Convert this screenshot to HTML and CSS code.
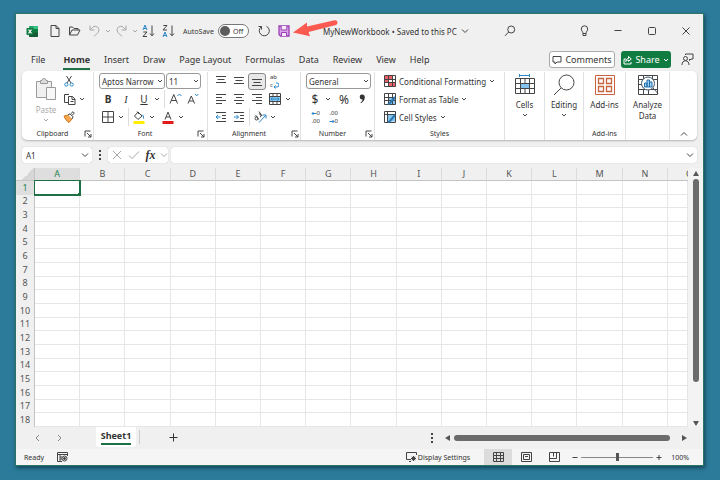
FILE: index.html
```html
<!DOCTYPE html>
<html lang="en">
<head>
  <meta charset="UTF-8" />
  <meta name="viewport" content="width=device-width, initial-scale=1" />
  <title>MyNewWorkbook</title>
  <link rel="stylesheet" href="styles.css">
</head>
<body>

  <svg class="sprite" aria-hidden="true">
    <symbol id="chev" viewBox="0 0 6 6"><path d="M1 2l2 2 2-2" /></symbol>
    <symbol id="chev-big" viewBox="0 0 8 8"><path d="M1 2.500l3 3 3-3" /></symbol>
    <symbol id="launch" viewBox="0 0 8 8"><path d="M1 6.500V1h5.500M3 3l4 4M7 4v3H4" /></symbol>
  </svg>

  <div class="window">

    <header class="titlebar">
      <span class="app-icon">
        <svg width="13" height="13" viewBox="0 0 13 13">
          <rect x="3" y="1" width="9" height="11" rx="1" fill="#21a366" />
          <path d="M3 6h9v5a1 1 0 0 1-1 1H4a1 1 0 0 1-1-1z" fill="#185c37" />
          <path d="M7.500 1H11a1 1 0 0 1 1 1v2H7.500z" fill="#33c481" />
          <rect x="7.500" y="4" width="4.500" height="3.500" fill="#107c41" />
          <rect x="0.500" y="3" width="7" height="7" rx="0.700" fill="#107c41" />
          <path d="M2.500 4.700l3 3.700M5.500 4.700l-3 3.700" stroke="#fff" stroke-width="1.100" fill="none" />
        </svg>
      </span>
      <div class="quick">
        <button aria-label="New"><svg class="ic" width="12" height="14" viewBox="0 0 12 14"><path d="M2 1.500h5l3 3v8H2zM7 1.500v3h3" /></svg></button>
        <button aria-label="Open"><svg class="ic" width="13" height="12" viewBox="0 0 13 12"><path d="M1.500 10V2h3l1.500 1.500h4V5M1.500 10L4 5h8l-2.500 5z" /></svg></button>
        <span class="split off">
          <button aria-label="Undo"><svg class="ic" width="13" height="14" viewBox="0 0 13 14"><path d="M2 1.500v4.500h4.500M2 6l2.500-2.500a3.700 3.700 0 0 1 5.500 5L6 12.500" /></svg></button>
          <button class="arr" aria-label="Undo list"><svg class="ic" width="6" height="6"><use href="#chev" /></svg></button>
        </span>
        <span class="split off">
          <button aria-label="Redo"><svg class="ic" width="13" height="14" viewBox="0 0 13 14"><path d="M11 1.500v4.500H6.500M11 6L8.500 3.500a3.700 3.700 0 0 0-5.500 5l4 4" /></svg></button>
          <button class="arr" aria-label="Redo list"><svg class="ic" width="6" height="6"><use href="#chev" /></svg></button>
        </span>
        <button aria-label="Sort A to Z"><svg class="ic" width="13" height="14" viewBox="0 0 13 14"><path class="blue" d="M1 6l2-5 2 5M1.700 4.500h2.600" /><path d="M1.300 8H5l-4 4.500h4M10 1.500v10M8 9.500l2 2.300 2-2.300" /></svg></button>
        <button aria-label="Sort Z to A"><svg class="ic" width="13" height="14" viewBox="0 0 13 14"><path d="M1.300 1.500H5L1 6h4M10 1.500v10M8 9.500l2 2.300 2-2.300" /><path class="blue" d="M1 13l2-5 2 5M1.700 11.500h2.600" /></svg></button>
      </div>
      <label class="autosave">AutoSave
        <span class="toggle"><input type="checkbox" role="switch"><span>Off</span></span>
      </label>
      <div class="quick">
        <button aria-label="Refresh"><svg class="ic" width="14" height="14" viewBox="0 0 14 14"><path d="M4.500 2.500H1.500M4.500 2.500v3M4.300 2.800A5 5 0 1 0 9.500 2.300" /></svg></button>
        <button aria-label="Save"><svg width="12" height="12" viewBox="0 0 12 12"><path d="M1 1h10v10H2.500L1 9.500z" fill="#d9a5e6" stroke="#9b3fb5" stroke-width="1.300" /><path d="M3.200 1v4h5.600V1M3.500 11V7.500h5V11" fill="#f6eaf9" stroke="#9b3fb5" /></svg></button>
      </div>
      <h1 class="doc">MyNewWorkbook • Saved to this PC <svg class="ic" width="8" height="8"><use href="#chev-big" /></svg></h1>
      <button class="search" aria-label="Search"><svg class="ic" width="12" height="12" viewBox="0 0 12 12"><circle cx="7.200" cy="4.500" r="3.500" /><path d="M4.700 7L1 10.800" /></svg></button>
      <div class="sys">
        <button aria-label="Tips"><svg class="ic" width="9" height="12" viewBox="0 0 9 12"><path d="M3 8.500C3 6.500 1.300 6 1.300 4a3.200 3.200 0 0 1 6.400 0C7.700 6 6 6.500 6 8.500v2H3zM3 8.500h3" /></svg></button>
        <button aria-label="Minimize"><svg class="ic" width="8" height="8" viewBox="0 0 8 8"><path d="M0.500 3.500h7" /></svg></button>
        <button aria-label="Maximize"><svg class="ic" width="8" height="8" viewBox="0 0 8 8"><rect x="0.500" y="0.500" width="7" height="7" rx="1" /></svg></button>
        <button aria-label="Close"><svg class="ic" width="8" height="8" viewBox="0 0 8 8"><path d="M0.500 0.500l7 7M7.500 0.500l-7 7" /></svg></button>
      </div>
      <svg class="pointer" width="46" height="18" viewBox="0 0 46 18">
        <path d="M0 12.500L14 2.500L14 6.500L41.500 0.200Q44.500 0 44.500 2.500Q44.500 4.300 43 5L15.500 12L17 16.200Z" fill="#fb5a50" />
      </svg>
    </header>

    <nav class="tabs">
      <button class="file">File</button>
      <button class="active">Home</button>
      <button>Insert</button>
      <button>Draw</button>
      <button>Page Layout</button>
      <button>Formulas</button>
      <button>Data</button>
      <button>Review</button>
      <button>View</button>
      <button>Help</button>
      <div class="actions">
        <button class="comments"><svg class="ic" width="10" height="10" viewBox="0 0 10 10"><path d="M1 1.500h8v5.500H5L3 9V7H1z" /></svg>Comments</button>
        <button class="share"><svg class="ic" width="9" height="10" viewBox="0 0 9 10"><path d="M3 4H1v5h7V7M2.800 6.500C3 4.500 4 3.500 5.500 3.500V1.500L8.300 4 5.500 6.300V5C4.300 5 3.500 5.500 2.800 6.500z" /></svg>Share<svg class="ic" width="6" height="6"><use href="#chev" /></svg></button>
        <button class="person" aria-label="Account"><svg class="ic" width="13" height="13" viewBox="0 0 13 13"><circle cx="4.500" cy="5.500" r="2" /><path d="M1 12c0-3 1.500-4.200 3.500-4.200S8 9 8 12M4.500 2V1h7.500v5h-2L8.500 7.500V6" /></svg></button>
      </div>
    </nav>

    <section class="ribbon">
      <div class="group clipboard">
        <div class="body">
          <button class="big off paste">
            <svg width="24" height="24" viewBox="0 0 24 24" fill="#f0f0f0" stroke="#9a9a9a"><path d="M2.500 4.500h15v16h-15z" /><path d="M6.500 6.500v-3H8a2 2 0 0 1 4 0h1.500v3z" fill="#ddd" /><path d="M12.500 10.500h9v12h-9z" fill="#f7f7f7" /></svg>
            <span>Paste</span>
            <svg class="ic" width="6" height="6"><use href="#chev" /></svg>
          </button>
          <div class="rows">
            <div class="row"><button aria-label="Cut"><svg class="ic" width="10" height="12" viewBox="0 0 10 12"><path d="M2.500 1l4.500 7M7.500 1L3 8" /><circle class="blue" cx="2.300" cy="9.500" r="1.600" /><circle class="blue" cx="7.700" cy="9.500" r="1.600" /></svg></button></div>
            <div class="row"><button aria-label="Copy"><svg class="ic" width="13" height="12" viewBox="0 0 13 12"><path d="M5 9.500H1.500v-8H6M5.500 3.500h4l2.500 2.500v5.500H5.500zM9 3.500V6.500h3M7.500 8.500h3" /></svg></button><button class="arr" aria-label="Copy list"><svg class="ic" width="6" height="6"><use href="#chev" /></svg></button></div>
            <div class="row"><button aria-label="Format Painter"><svg width="12" height="12" viewBox="0 0 12 12"><path d="M1 5l4-1 4 4-3 3.500C4 10.500 2 8 1 5z" fill="#f4a650" stroke="#d8771a" /><path d="M5 4l2-1.200 3 3L9 8M7.500 3L10 0.700l1.300 1.300L9 4.500" fill="#fff" stroke="#444" /></svg></button></div>
          </div>
        </div>
        <footer><span>Clipboard</span><button aria-label="Clipboard settings"><svg class="ic" width="8" height="8"><use href="#launch" /></svg></button></footer>
      </div>

      <div class="group font">
        <div class="rows">
          <div class="row combos">
            <select class="face" aria-label="Font"><option>Aptos Narrow</option></select>
            <select class="size" aria-label="Font size"><option>11</option></select>
          </div>
          <div class="row">
            <button class="glyph"><b>B</b></button><button class="glyph serif"><i>I</i></button><button class="glyph"><u>U</u></button><button class="arr" aria-label="Underline list"><svg class="ic" width="6" height="6"><use href="#chev" /></svg></button>
            <i class="sep wide"></i>
            <button aria-label="Increase font size"><svg class="ic" width="13" height="12" viewBox="0 0 13 12"><path d="M1 10.500L4.800 1.500l3.700 9M2.500 7.500h4.700" /><path class="blue" d="M8.500 3L10.500 1l2 2" /></svg></button>
            <button aria-label="Decrease font size"><svg class="ic" width="12" height="12" viewBox="0 0 12 12"><path d="M1 10.500L4.300 3l3.300 7.500M2.300 8h4" /><path class="blue" d="M8 1l1.800 1.800L11.500 1" /></svg></button>
          </div>
          <div class="row">
            <button aria-label="Borders"><svg class="ic" width="12" height="12" viewBox="0 0 12 12"><path d="M0.500 0.500h11v11h-11zM6 0.500v11M0.500 6h11" /></svg></button><button class="arr" aria-label="Borders list"><svg class="ic" width="6" height="6"><use href="#chev" /></svg></button>
            <i class="sep wide"></i>
            <button aria-label="Fill color"><svg class="ic" width="12" height="13" viewBox="0 0 12 13"><path d="M5 1L9 5 5 8.500 1.500 5zM4 0.500L6 3" /><path class="blue" d="M9 3.500q2 1 1.500 4" /><path class="yellow" d="M0.500 11.500h11" /></svg></button><button class="arr" aria-label="Fill list"><svg class="ic" width="6" height="6"><use href="#chev" /></svg></button>
            <button class="gap" aria-label="Font color"><svg class="ic" width="12" height="13" viewBox="0 0 12 13"><path d="M3 8.500L6 1l3 7.500M4 6h4" /><path class="red" d="M0.500 11.500h11" /></svg></button><button class="arr" aria-label="Font color list"><svg class="ic" width="6" height="6"><use href="#chev" /></svg></button>
          </div>
        </div>
        <footer><span>Font</span><button aria-label="Font settings"><svg class="ic" width="8" height="8"><use href="#launch" /></svg></button></footer>
      </div>

      <div class="group align">
        <div class="rows">
          <div class="row">
            <button aria-label="Top align"><svg class="ic" width="12" height="12" viewBox="0 0 12 12"><path d="M1 1.500h10M2.500 4.500h7M1 7.500h10" /></svg></button>
            <button aria-label="Middle align"><svg class="ic" width="12" height="12" viewBox="0 0 12 12"><path d="M1 2.500h10M2.500 5.500h7M1 8.500h10" /></svg></button>
            <button class="on" aria-label="Bottom align"><svg class="ic" width="12" height="12" viewBox="0 0 12 12"><path d="M1 4.500h10M2.500 7.500h7M1 10.500h10" /></svg></button>
            <button class="wrap" aria-label="Wrap text"><span>ab</span><span>c<svg class="ic" width="6" height="7" viewBox="0 0 6 7"><path class="blue" d="M3 1h1a1.500 1.500 0 0 1 0 4H1M2.500 3.500L1 5l1.500 1.500" /></svg></span></button>
          </div>
          <div class="row">
            <button aria-label="Align left"><svg class="ic" width="12" height="12" viewBox="0 0 12 12"><path d="M1 1.500h10M1 4.500h6M1 7.500h10M1 10.500h6" /></svg></button>
            <button aria-label="Center"><svg class="ic" width="12" height="12" viewBox="0 0 12 12"><path d="M1 1.500h10M3 4.500h6M1 7.500h10M3 10.500h6" /></svg></button>
            <button aria-label="Align right"><svg class="ic" width="12" height="12" viewBox="0 0 12 12"><path d="M1 1.500h10M5 4.500h6M1 7.500h10M5 10.500h6" /></svg></button>
            <button aria-label="Merge and center"><svg class="ic" width="12" height="12" viewBox="0 0 12 12"><path class="tint" d="M1 3.500h10v5H1z" /><path d="M0.500 0.500h11v11h-11zM0.500 3.500h11M0.500 8.500h11M4 1v2.500M8 1v2.500M4 8.500V11M8 8.500V11" /><path class="blue" d="M2 6h8M3.500 4.700L2 6l1.500 1.300M8.500 4.700L10 6 8.500 7.300" /></svg></button><button class="arr" aria-label="Merge list"><svg class="ic" width="6" height="6"><use href="#chev" /></svg></button>
          </div>
          <div class="row">
            <button aria-label="Decrease indent"><svg class="ic" width="12" height="12" viewBox="0 0 12 12"><path d="M1 1.500h10M7 4.500h4M7 7.500h4M1 10.500h10" /><path class="blue" d="M1 6h4.500M3 4L1 6l2 2" /></svg></button>
            <button aria-label="Increase indent"><svg class="ic" width="12" height="12" viewBox="0 0 12 12"><path d="M1 1.500h10M7 4.500h4M7 7.500h4M1 10.500h10" /><path class="blue" d="M1 6h4.500M3.500 4l2 2-2 2" /></svg></button>
            <i class="sep"></i>
            <button aria-label="Orientation"><svg class="ic" width="13" height="12" viewBox="0 0 13 12"><path d="M5 0.500l3 4.500M5 3a1.500 1.500 0 1 1 1 3M4.500 8.500L2.500 5Q1.500 4 1 5.500" /><circle cx="2.500" cy="7.500" r="1.500" /><path class="blue" d="M5 11.500L11.500 4.500M8.500 4h3.500v3.500" /></svg></button><button class="arr" aria-label="Orientation list"><svg class="ic" width="6" height="6"><use href="#chev" /></svg></button>
          </div>
        </div>
        <footer><span>Alignment</span><button aria-label="Alignment settings"><svg class="ic" width="8" height="8"><use href="#launch" /></svg></button></footer>
      </div>

      <div class="group number">
        <div class="rows">
          <div class="row"><select class="format" aria-label="Number format"><option>General</option></select></div>
          <div class="row">
            <button class="sign">$</button><button class="arr" aria-label="Currency list"><svg class="ic" width="6" height="6"><use href="#chev" /></svg></button>
            <button class="sign gap">%</button><button aria-label="Comma style"><svg width="7" height="10" viewBox="0 0 7 10"><path d="M3 0.500a2.500 2.500 0 0 1 2.800 2.800C5.800 6 4.300 8 2 9.200L1.500 8.500C3 7.500 3.500 6.500 3.500 5.500A2.500 2.500 0 0 1 3 0.500z" fill="#333" /></svg></button>
          </div>
          <div class="row">
            <button class="dec" aria-label="Increase decimal"><span><svg class="ic" width="6" height="5" viewBox="0 0 6 5"><path class="blue" d="M1 2.500h4.500M2.500 1L1 2.500 2.500 4" /></svg>0</span><span>.00</span></button>
            <button class="dec" aria-label="Decrease decimal"><span>.00</span><span><svg class="ic" width="6" height="5" viewBox="0 0 6 5"><path class="blue" d="M0.500 2.500H5M3.500 1L5 2.500 3.500 4" /></svg>0</span></button>
          </div>
        </div>
        <footer><span>Number</span><button aria-label="Number settings"><svg class="ic" width="8" height="8"><use href="#launch" /></svg></button></footer>
      </div>

      <div class="group styles">
        <div class="rows">
          <button class="item"><svg class="ic" width="12" height="12" viewBox="0 0 12 12"><path class="redfill" d="M1 1h7v3.500H1zM1 4.500h3.500v3H1zM4.500 7.500H11V11H4.500z" /><path d="M0.500 0.500h11v11h-11zM0.500 4.500h11M0.500 7.500h11M4.500 0.500v11M8.500 0.500v11" /></svg>Conditional Formatting<svg class="ic" width="6" height="6"><use href="#chev" /></svg></button>
          <button class="item"><svg class="ic" width="12" height="12" viewBox="0 0 12 12"><path class="tint" d="M4 4h7v7H4z" /><path d="M0.500 0.500h11v11h-11zM0.500 4.500h11M0.500 7.500h11M4.500 0.500v11M8.500 0.500v11" /><path class="brush" d="M11 4L6 10l-2 1.500" /></svg>Format as Table<svg class="ic" width="6" height="6"><use href="#chev" /></svg></button>
          <button class="item"><svg class="ic" width="12" height="12" viewBox="0 0 12 12"><path class="tint" d="M3 3.500h8v7H3z" /><path d="M0.500 0.500h11v11h-11zM0.500 3.500h11M3.500 0.500v11" /><path class="brush" d="M11 4L6 10l-2 1.500" /></svg>Cell Styles<svg class="ic" width="6" height="6"><use href="#chev" /></svg></button>
        </div>
        <footer><span>Styles</span></footer>
      </div>

      <div class="group single cells">
        <button class="big">
          <svg class="ic" width="22" height="22" viewBox="0 0 22 22"><path class="blue" d="M5 1.500h11M5.500 0v3M15.500 0v3" /><path class="tint" d="M6 9.500h10v5H6z" /><path d="M1.500 4.500h19v15h-19zM1.500 9.500h19M1.500 14.500h19M6.500 4.500v15M15.500 4.500v15M11 4.500v5M11 14.500v5" /></svg>
          <span>Cells</span><svg class="ic" width="6" height="6"><use href="#chev" /></svg>
        </button>
      </div>
      <div class="group single editing">
        <button class="big">
          <svg class="ic" width="22" height="22" viewBox="0 0 22 22"><circle cx="13.500" cy="8.500" r="7.500" /><path d="M8 14l-7 7" /></svg>
          <span>Editing</span><svg class="ic" width="6" height="6"><use href="#chev" /></svg>
        </button>
      </div>
      <div class="group single addins">
        <button class="big">
          <svg width="22" height="22" viewBox="0 0 22 22" fill="none" stroke="#c9623f"><path d="M1.500 1.500h19v19h-19z" /><path d="M4.500 4.500h5v5h-5zM12.500 4.500h5v5h-5zM4.500 12.500h5v5h-5zM12.500 12.500h5v5h-5z" stroke-width="1.300" /></svg>
          <span>Add-ins</span>
        </button>
        <footer><span>Add-ins</span></footer>
      </div>
      <div class="group single analyze">
        <button class="big">
          <svg class="ic" width="22" height="22" viewBox="0 0 22 22"><path d="M1.500 1.500h19v19h-19zM1.500 5.500h19M1.500 10.500h4M1.500 15.500h19M6.500 1.500v4M15.500 1.500v4M6.500 15.500v5M11.500 15.500v5" /><circle class="lens" cx="11" cy="9.500" r="6.500" /><path class="lens" d="M16 14l5 5.500" /><path class="bars" d="M7.500 13V9h2.500v4zM10 13V6h2.500v7zM12.500 13V8H15v5z" /></svg>
          <span>Analyze<br>Data</span>
        </button>
      </div>
      <button class="collapse" aria-label="Collapse ribbon"><svg class="ic" width="8" height="8" viewBox="0 0 8 8"><path d="M1 5.500l3-3 3 3" /></svg></button>
    </section>

    <div class="formula">
      <div class="namebox"><input aria-label="Name box" value="A1"><button aria-label="Names"><svg class="ic" width="8" height="8"><use href="#chev-big" /></svg></button></div>
      <span class="dots"><i></i><i></i><i></i></span>
      <div class="fxbox">
        <button class="off" aria-label="Cancel"><svg class="ic" width="10" height="10" viewBox="0 0 10 10"><path d="M1 1l8 8M9 1L1 9" /></svg></button>
        <button class="off" aria-label="Enter"><svg class="ic" width="12" height="10" viewBox="0 0 12 10"><path d="M1 5.500L4 8.500 11 1.500" /></svg></button>
        <button class="fx">fx</button>
        <button class="off arr" aria-label="Functions"><svg class="ic" width="8" height="8"><use href="#chev-big" /></svg></button>
      </div>
      <div class="entry"><input aria-label="Formula bar"><button aria-label="Expand formula bar"><svg class="ic" width="8" height="8"><use href="#chev-big" /></svg></button></div>
    </div>

    <main class="sheet">
      <div class="grid">
        <table>
          <colgroup><col class="rowhead"><col span="14"><col class="last"></colgroup>
          <thead><tr id="head"><td class="corner"></td></tr></thead>
          <tbody id="cells"></tbody>
        </table>
      </div>
      <div class="vscroll"><i class="up"></i><div class="track"><div class="thumb"></div></div><i class="down"></i></div>
    </main>

    <div class="sheetbar">
      <button aria-label="Previous sheet"><svg class="ic" width="6" height="8" viewBox="0 0 6 8"><path d="M5 1L2 4l3 3" /></svg></button>
      <button aria-label="Next sheet"><svg class="ic" width="6" height="8" viewBox="0 0 6 8"><path d="M1 1l3 3-3 3" /></svg></button>
      <button class="tab"><span>Sheet1</span></button>
      <button class="add" aria-label="New sheet"><svg class="ic" width="9" height="9" viewBox="0 0 9 9"><path d="M4.500 0.500v8M0.500 4.500h8" /></svg></button>
      <span class="dots"><i></i><i></i><i></i></span>
      <div class="hscroll"><i class="left"></i><div class="thumb"></div><i class="right"></i></div>
    </div>

    <footer class="status">
      <span>Ready</span>
      <button class="macro" aria-label="Record macro"><svg class="ic" width="11" height="10" viewBox="0 0 11 10"><path d="M5 9.500H0.500v-9h10V4M1 2.500h9M3 3v6M3 5h2M3 7h2" /><circle cx="7.500" cy="6.500" r="2.500" /><circle cx="7.500" cy="6.500" r="1" fill="#333" /></svg></button>
      <button class="display"><svg class="ic" width="11" height="10" viewBox="0 0 11 10"><path d="M5 7.500H0.500v-7h10V3M3 9.500h2" /><circle cx="7.500" cy="6.500" r="1.500" /><path d="M7.500 4v5M5 6.500h5M5.800 4.800l3.400 3.400M9.200 4.800L5.800 8.200" /></svg>Display Settings</button>
      <button class="view on" aria-label="Normal"><svg class="ic" width="11" height="10" viewBox="0 0 11 10"><path d="M0.500 0.500h10v9h-10zM0.500 3.500h10M0.500 6.500h10M3.500 0.500v9M7.500 0.500v9" /></svg></button>
      <button class="view" aria-label="Page Layout"><svg class="ic" width="11" height="10" viewBox="0 0 11 10"><path d="M0.500 0.500h10v9h-10zM2.500 2.500h6v5h-6zM4 4.500h3" /></svg></button>
      <button class="view" aria-label="Page Break"><svg class="ic" width="11" height="10" viewBox="0 0 11 10"><path d="M0.500 0.500h10v9h-10zM0.500 6.500h7v-6M4.500 0.500v4" /></svg></button>
      <div class="zoom">
        <button aria-label="Zoom out"><svg class="ic" width="6" height="6" viewBox="0 0 6 6"><path d="M0.500 3.500h5" /></svg></button>
        <input type="range" aria-label="Zoom" min="0" max="100" value="50">
        <button aria-label="Zoom in"><svg class="ic" width="6" height="6" viewBox="0 0 6 6"><path d="M0.500 3.500h5M3 1v5" /></svg></button>
      </div>
      <span>100%</span>
    </footer>
  </div>

  <script>
    const columns = 'ABCDEFGHIJKLMNO'.split('');
    const head = document.getElementById('head');
    const cells = document.getElementById('cells');

    columns.forEach(function (name) {
      head.insertAdjacentHTML('beforeend', '<th scope="col">' + name + '</th>');
    });

    for (let row = 1; row <= 18; row++) {
      cells.insertAdjacentHTML('beforeend',
        '<tr><th scope="row">' + row + '</th>' + columns.map(() => '<td></td>').join('') + '</tr>');
    }
    head.children[1].className = 'current';
    cells.rows[0].cells[0].className = 'current';
    cells.rows[0].cells[1].className = 'selected';
  </script>
</body>
</html>
```
FILE: styles.css
```css
* {
  box-sizing: border-box;
}

body {
  margin: 0;
  height: 100vh;
  padding: 14px 17px 15px 16px;
  background: #2c7b9a;
  font-family: "Noto Sans", "Open Sans", sans-serif;
  font-size: 8px;
  color: #333;
  display: flex;
}

.sprite {
  display: none;
}

button, input, select {
  font: inherit;
  color: inherit;
  border: none;
  background: none;
  padding: 0;
  margin: 0;
  min-width: 0;
}

button {
  display: flex;
  align-items: center;
  justify-content: center;
}

svg {
  flex: none;
}

.ic {
  fill: none;
  stroke: #444;
  stroke-width: 1;
}

.ic .blue { stroke: #2b88c8; }
.ic .yellow { stroke: #ffee00; stroke-width: 3; }
.ic .red { stroke: #e01b1b; stroke-width: 3; }
.ic .tint { fill: #83c3ee; stroke: none; }
.ic .redfill { fill: #f0606a; stroke: none; }
.ic .brush { stroke: #2b78b0; stroke-width: 2; }
.ic .lens { fill: #fff; stroke: #456; }
.ic .bars { fill: #9fd0f2; stroke: #1f6fae; }

.off {
  color: #aaa;
}

.off .ic {
  stroke: #a8a8a8;
}

.window {
  flex: 1;
  min-width: 0;
  display: flex;
  flex-direction: column;
  background: #f0f0f0;
  box-shadow: 0 0 0 1px #2c7466, 1px 2px 4px 1px rgba(0, 30, 40, 0.6);
}

/* title bar */

.titlebar {
  position: relative;
  height: 34px;
  display: flex;
  align-items: center;
}

.app-icon {
  display: flex;
  justify-content: center;
  width: 19px;
  margin: 0 3px 0 7px;
}

.quick {
  display: flex;
  gap: 1px;
}

.quick button {
  width: 19px;
  height: 20px;
}

.split {
  display: flex;
}

.quick .arr {
  width: 7px;
}

.autosave {
  display: flex;
  align-items: center;
  justify-content: space-between;
  width: 66px;
  margin: 0 5px;
  font-size: 7px;
}

.toggle {
  display: flex;
  align-items: center;
  gap: 3px;
  width: 31px;
  height: 14px;
  border: 1px solid #777;
  border-radius: 7px;
  background: #fff;
}

.toggle input {
  appearance: none;
  width: 10px;
  height: 10px;
  margin-left: 1px;
  border-radius: 50%;
  background: #5c5c5c;
}

.doc {
  display: flex;
  align-items: center;
  gap: 4px;
  margin: 0 auto 0 30px;
  font-size: 8px;
  font-weight: normal;
  white-space: nowrap;
}

.search {
  width: 24px;
  margin-right: 45px;
}

.sys {
  display: flex;
}

.sys button {
  width: 34px;
  height: 34px;
}

.pointer {
  position: absolute;
  left: 277px;
  top: 6px;
}

/* ribbon tabs */

.tabs {
  display: flex;
  height: 23px;
  padding: 0 6px 0 8px;
  font-size: 9px;
}

.tabs > button {
  padding: 0 7px;
  height: 23px;
}

.tabs .file {
  margin-right: 4px;
}

.tabs .active {
  font-weight: bold;
  background: linear-gradient(#1e7145, #1e7145) center 20px / calc(100% - 14px) 2px no-repeat;
}

.actions {
  display: flex;
  align-items: center;
  gap: 6px;
  margin-left: auto;
}

.comments, .share {
  height: 17px;
  border-radius: 3px;
  gap: 3px;
}

.comments {
  width: 66px;
  background: #fff;
  border: 1px solid #aaa;
}

.share {
  width: 50px;
  background: #107c41;
  color: #fff;
}

.share .ic {
  stroke: #fff;
}

.person {
  width: 20px;
}

/* ribbon */

.ribbon {
  display: flex;
  height: 69px;
  margin: 0 6px;
  padding-top: 1px;
  background: #fff;
  border-radius: 5px;
  box-shadow: 0 1px 2px rgba(0, 0, 0, 0.25);
}

.group {
  display: flex;
  flex-direction: column;
  border-right: 1px solid #e1e1e1;
}

.body {
  display: flex;
}

.group footer {
  display: flex;
  align-items: center;
  height: 13px;
  margin-top: auto;
  font-size: 7px;
}

.group footer span {
  flex: 1;
  text-align: center;
}

.group footer button {
  width: 10px;
}

.row {
  display: flex;
  align-items: center;
  height: 18px;
}

.row button {
  width: 18px;
  height: 17px;
}

.row .arr {
  width: 8px;
}

.row .gap {
  margin-left: 3px;
}

.row .on {
  background: #e8e8e8;
  border: 1px solid #888;
  border-radius: 3px;
}

.sep {
  width: 1px;
  height: 18px;
  margin: 0 1px;
  background: #ddd;
}

.sep.wide {
  margin: 0 1px 0 3px;
}

.big {
  flex-direction: column;
  line-height: 11px;
}

.big span {
  margin: 3px 0 2px;
}

.clipboard { width: 72px; }
.font { width: 114px; }
.align { width: 93px; }
.number { width: 74px; }
.styles { width: 130px; }
.cells { width: 40px; }
.editing { width: 39px; }
.addins { width: 42px; }
.analyze { width: 44px; }

.paste {
  width: 24px;
  margin: 2px 2px 0 12px;
}

.font .rows { padding-left: 5px; }
.font footer { padding-right: 1px; }
.align .rows { padding-left: 4px; }
.number .rows { padding-left: 5px; }
.styles .rows { padding-left: 9px; }

.single {
  align-items: center;
  padding-top: 2px;
}

select {
  appearance: none;
  height: 16px;
  padding-left: 2px;
  border: 1px solid #999;
  border-radius: 3px;
  background: #fff url("data:image/svg+xml,%3Csvg xmlns='http://www.w3.org/2000/svg' width='6' height='6' fill='none' stroke='%23444'%3E%3Cpath d='M1 2l2 2 2-2'/%3E%3C/svg%3E") right 1px center no-repeat;
}

.combos {
  gap: 1px;
}

.face { width: 66px; }
.size { width: 35px; }
.format { width: 65px; }

.glyph {
  font-size: 10px;
}

.serif {
  font-family: "Liberation Serif", serif;
}

.sign {
  font-size: 12px;
}

.wrap, .dec {
  flex-direction: column;
  font-size: 6px;
  line-height: 8px;
}

.wrap span, .dec span {
  display: flex;
  align-items: center;
  height: 8px;
}

.wrap {
  align-items: flex-start;
  padding-left: 4px;
}

.dec {
  align-items: flex-end;
  padding-right: 4px;
}

.item {
  height: 18px;
  gap: 3px;
  white-space: nowrap;
}

.collapse {
  flex: 1;
  align-items: flex-end;
  padding-bottom: 2px;
}

/* formula bar */

.formula {
  display: flex;
  height: 16px;
  margin: 7px 6px 5px;
}

.namebox, .fxbox, .entry {
  display: flex;
  align-items: center;
  background: #fff;
  border-radius: 3px;
  box-shadow: 0 0 1px rgba(0, 0, 0, 0.3);
}

.namebox {
  width: 70px;
}

.namebox input, .entry input {
  flex: 1;
  padding-left: 4px;
}

.namebox button, .entry button {
  width: 14px;
}

.dots {
  display: flex;
  flex-direction: column;
  align-items: center;
  justify-content: center;
  gap: 2px;
  width: 16px;
}

.dots i {
  width: 2px;
  height: 2px;
  background: #444;
}

.fxbox {
  width: 60px;
  margin-right: 3px;
}

.fxbox button {
  width: 17px;
}

.fxbox .arr {
  width: 9px;
}

.fxbox .fx {
  font: italic bold 12px "Liberation Serif", serif;
}

.entry {
  flex: 1;
}

/* cells */

.sheet {
  flex: 1;
  min-height: 0;
  display: flex;
}

.grid {
  flex: 1;
  overflow: hidden;
  background: #fff;
}

table {
  width: 100%;
  height: 100%;
  table-layout: fixed;
  border-collapse: separate;
  border-spacing: 0;
}

.rowhead { width: 19px; }
.last { width: 20px; }

th, td {
  padding: 0;
  height: 13px;
  line-height: 12px;
  overflow: hidden;
}

th {
  font-size: 9px;
  font-weight: normal;
  color: #555;
  background: #f0f0f0;
}

td {
  border-right: 1px solid #e6e6e6;
  border-bottom: 1px solid #e6e6e6;
}

thead th {
  border-right: 1px solid #dcdcdc;
  border-bottom: 1px solid #c4c4c4;
}

thead th:last-child {
  padding-left: 18px;
  border-right: none;
}

tbody th {
  border-right: 1px solid #c4c4c4;
}

.corner {
  background: linear-gradient(135deg, #f0f0f0 60%, #d6d6d6 60%);
  border-color: #c4c4c4;
}

th.current {
  background: #dedede;
  color: #1e7e4a;
}

.selected {
  position: relative;
  overflow: visible;
  outline: 1px solid #1e7145;
  border-color: #1e7145;
}

.selected::after {
  content: "";
  position: absolute;
  right: -2px;
  bottom: -2px;
  width: 3px;
  height: 3px;
  background: #1e7145;
}

.vscroll {
  display: flex;
  flex-direction: column;
  align-items: center;
  width: 15px;
  padding: 3px 0 1px;
  background: #f3f3f3;
}

.track {
  flex: 1;
  padding: 3px 0;
}

.thumb {
  background: #6b6b6b;
  border-radius: 3px;
}

.vscroll .thumb {
  width: 6px;
  height: 85%;
}

.up, .down {
  border: 3px solid transparent;
}

.up {
  border-top: none;
  border-bottom: 5px solid #555;
}

.down {
  border-bottom: none;
  border-top: 5px solid #555;
}

/* sheet tabs */

.sheetbar {
  display: flex;
  height: 22px;
}

.sheetbar > button {
  width: 23px;
}

.sheetbar > button:first-child {
  margin-left: 9px;
}

.sheetbar .ic {
  stroke: #888;
}

.sheetbar .tab {
  width: 40px;
  height: 20px;
  margin: 0 3px 0 25px;
  background: #fff;
  border-radius: 0 0 3px 3px;
  font-size: 9px;
  font-weight: bold;
}

.tab span {
  border-bottom: 2px solid #1e7145;
  line-height: 14px;
}

.sheetbar .add {
  width: 67px;
  height: 14px;
  margin-top: 3px;
  border-left: 1px solid #ccc;
}

.add .ic {
  stroke: #333;
}

.sheetbar .dots {
  width: 20px;
  margin-left: auto;
}

.hscroll {
  display: flex;
  align-items: center;
  width: 38%;
  padding: 0 16px 0 3px;
}

.hscroll .thumb {
  flex: 1;
  height: 6px;
  margin: 0 12px 0 4px;
}

.left, .right {
  border: 3px solid transparent;
}

.left {
  border-left: none;
  border-right: 5px solid #555;
}

.right {
  border-right: none;
  border-left: 5px solid #555;
}

/* status bar */

.status {
  display: flex;
  align-items: center;
  height: 16px;
  padding: 0 14px 0 8px;
  background: #f5f5f5;
  font-size: 7px;
}

.macro {
  margin-left: 13px;
}

.display {
  gap: 1px;
  margin: 0 14px 0 auto;
}

.view {
  width: 28px;
  height: 16px;
}

.view.on {
  background: #dcdcdc;
}

.zoom {
  display: flex;
  align-items: center;
  gap: 3px;
  margin: 0 9px 0 4px;
}

.zoom input {
  appearance: none;
  width: 72px;
  height: 10px;
  background: linear-gradient(#888, #888) center / 100% 1px no-repeat;
}

.zoom input::-webkit-slider-thumb {
  appearance: none;
  width: 3px;
  height: 8px;
  background: #555;
}
```
